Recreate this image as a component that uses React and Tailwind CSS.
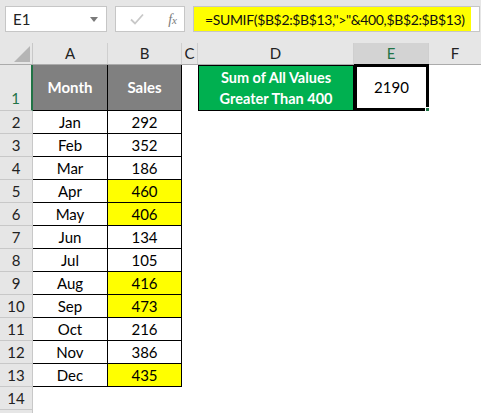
import React from "react"

const rows = [
  { n: 2, month: "Jan", sales: 292 },
  { n: 3, month: "Feb", sales: 352 },
  { n: 4, month: "Mar", sales: 186 },
  { n: 5, month: "Apr", sales: 460 },
  { n: 6, month: "May", sales: 406 },
  { n: 7, month: "Jun", sales: 134 },
  { n: 8, month: "Jul", sales: 105 },
  { n: 9, month: "Aug", sales: 416 },
  { n: 10, month: "Sep", sales: 473 },
  { n: 11, month: "Oct", sales: 216 },
  { n: 12, month: "Nov", sales: 386 },
  { n: 13, month: "Dec", sales: 435 },
]

const font = { fontFamily: "Lato, 'Open Sans', sans-serif" }

function RowHeader({ children, className = "" }) {
  return (
    <div
      className={`w-[33px] shrink-0 h-full flex items-center justify-center bg-[#e6e6e6] border-r border-b border-[#c8c8c8] text-[15px] text-[#222] ${className}`}
    >
      {children}
    </div>
  )
}

function ColHeader({ label, w, active }) {
  return (
    <div
      className={`${w} shrink-0 h-full flex items-center justify-center border-r border-[#cfcfcf] text-[15px] ${
        active ? "bg-[#d3d3d3] text-[#217346]" : "text-[#222]"
      }`}
    >
      {label}
    </div>
  )
}

export default function App() {
  return (
    <div className="w-[481px] h-[413px] overflow-hidden bg-white text-black" style={font}>
      {/* formula bar */}
      <div className="h-[43px] bg-[#e6e6e6] flex items-start pt-[6px] pl-[5px]">
        <div className="w-[102px] h-[26px] bg-white border border-[#c6c6c6] flex items-center justify-between pl-[7px] pr-[8px]">
          <span className="text-[15px] text-[#222]">E1</span>
          <span className="w-0 h-0 border-l-[4px] border-r-[4px] border-t-[5px] border-l-transparent border-r-transparent border-t-[#7a7a7a]" />
        </div>
        <div className="ml-[8px] w-[70px] h-[26px] bg-white border border-[#c6c6c6] flex items-center justify-between pl-[14px] pr-[7px]">
          <svg width="14" height="12" viewBox="0 0 14 12">
            <path d="M1 6.5 L5 10.5 L13 1.5" fill="none" stroke="#c8c8c8" strokeWidth="1.8" />
          </svg>
          <span className="text-[14px] italic text-[#7a7a7a]" style={{ fontFamily: "'Liberation Serif', serif" }}>
            f<span className="text-[11px]">x</span>
          </span>
        </div>
        <div className="ml-[8px] w-[287px] h-[26px] bg-white border border-[#c6c6c6] flex overflow-hidden">
          <div className="w-[277px] h-full bg-[#ffff00] flex items-center pl-[11px] text-[14px] tracking-[-0.35px] text-[#111] whitespace-nowrap overflow-hidden">
            =SUMIF($B$2:$B$13,"&gt;"&amp;400,$B$2:$B$13)
          </div>
        </div>
      </div>

      {/* column headers */}
      <div className="h-[22px] flex bg-[#e6e6e6] border-b border-[#ababab]">
        <div className="w-[33px] shrink-0 h-full border-r border-[#c8c8c8] flex items-end justify-end pr-[2px] pb-[2px]">
          <svg width="16" height="16" viewBox="0 0 16 16">
            <path d="M16 0 L16 16 L0 16 Z" fill="#b5b5b5" />
          </svg>
        </div>
        <ColHeader label="A" w="w-[75px]" />
        <ColHeader label="B" w="w-[74px]" />
        <ColHeader label="C" w="w-[16px]" />
        <ColHeader label="D" w="w-[156px]" />
        <ColHeader label="E" w="w-[75px]" active />
        <div className="flex-1 h-full flex items-center justify-center text-[15px] text-[#222]">F</div>
      </div>

      {/* row 1 */}
      <div className="h-[46px] flex">
        <div className="w-[33px] shrink-0 h-full flex items-end justify-center pb-[1px] bg-[#e6e6e6] border-r-2 border-r-[#217346] border-b border-b-[#c8c8c8] text-[15px] text-[#217346]">
          1
        </div>
        <div className="w-[75px] shrink-0 h-full bg-[#808080] border-r border-b border-black flex items-center justify-center text-[15px] font-bold text-white">
          Month
        </div>
        <div className="w-[74px] shrink-0 h-full bg-[#808080] border-r border-b border-black flex items-center justify-center text-[15px] font-bold text-white">
          Sales
        </div>
        <div className="w-[16px] shrink-0" />
        <div className="w-[156px] shrink-0 h-full bg-[#00b050] border border-black flex flex-col items-center justify-center text-[14.5px] leading-[21px] font-bold text-white">
          <span>Sum of All Values</span>
          <span>Greater Than 400</span>
        </div>
        <div className="relative w-[75px] shrink-0 h-[47px] -mt-[1px] border-[3px] border-black flex items-center justify-center text-[15px]">
          2190
          <span className="absolute -right-[4px] -bottom-[4px] w-[5px] h-[5px] bg-[#217346] border border-white" />
        </div>
      </div>

      {/* rows 2-13 */}
      {rows.map((r) => (
        <div key={r.n} className="h-[23px] flex">
          <RowHeader>{r.n}</RowHeader>
          <div className="w-[75px] shrink-0 h-full border-r border-b border-black flex items-center justify-center text-[15px]">
            {r.month}
          </div>
          <div
            className={`w-[74px] shrink-0 h-full border-r border-b border-black flex items-center justify-center text-[15px] ${
              r.sales > 400 ? "bg-[#ffff00]" : ""
            }`}
          >
            {r.sales}
          </div>
        </div>
      ))}

      {/* trailing empty rows */}
      <div className="h-[23px] flex">
        <RowHeader>14</RowHeader>
      </div>
      <div className="h-[23px] flex">
        <RowHeader />
      </div>
    </div>
  )
}
